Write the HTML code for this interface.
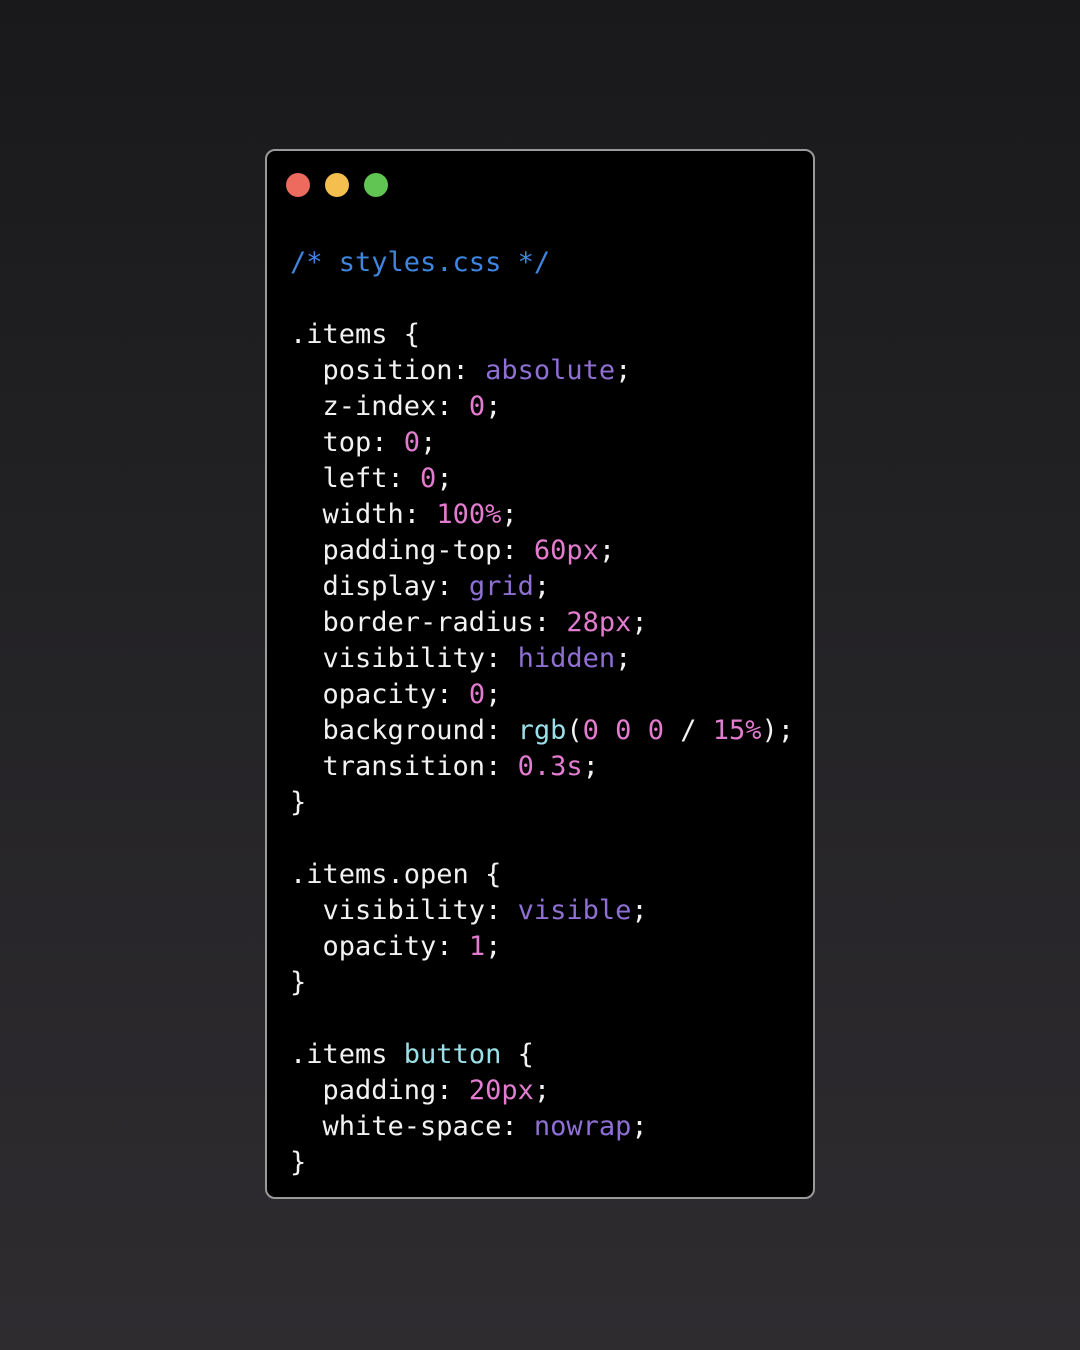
<!DOCTYPE html>
<html><head><style>
html,body{margin:0;padding:0}
body{width:1080px;height:1350px;background:linear-gradient(180deg,#19191b 0%,#242326 50%,#2f2c30 100%);position:relative;overflow:hidden}
.card{position:absolute;left:265px;top:149px;width:546px;height:1046px;background:#000;border:2px solid #9a9a9a;border-radius:10px}
.dot{position:absolute;top:173px;width:24px;height:24px;border-radius:50%}
pre{position:absolute;left:290px;top:245px;margin:0;font-family:"DejaVu Sans Mono","Liberation Mono",monospace;font-size:27px;line-height:36px;color:#f2f2f2}
.c{color:#3f86e0}.p{color:#8e6fd2}.n{color:#e27ccf}.t{color:#9be0e8}
</style></head><body>
<div class="card"></div>
<div class="dot" style="left:286px;background:#ec6a5e"></div>
<div class="dot" style="left:325px;background:#f4bf4f"></div>
<div class="dot" style="left:364px;background:#61c554"></div>
<pre><span class="c">/* styles.css */</span>

.items {
  position: <span class="p">absolute</span>;
  z-index: <span class="n">0</span>;
  top: <span class="n">0</span>;
  left: <span class="n">0</span>;
  width: <span class="n">100%</span>;
  padding-top: <span class="n">60px</span>;
  display: <span class="p">grid</span>;
  border-radius: <span class="n">28px</span>;
  visibility: <span class="p">hidden</span>;
  opacity: <span class="n">0</span>;
  background: <span class="t">rgb</span>(<span class="n">0</span> <span class="n">0</span> <span class="n">0</span> / <span class="n">15%</span>);
  transition: <span class="n">0.3s</span>;
}

.items.open {
  visibility: <span class="p">visible</span>;
  opacity: <span class="n">1</span>;
}

.items <span class="t">button</span> {
  padding: <span class="n">20px</span>;
  white-space: <span class="p">nowrap</span>;
}</pre>
</body></html>
